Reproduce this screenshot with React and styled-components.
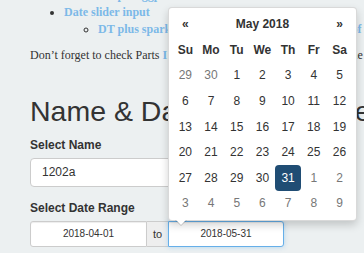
import React from 'react';
import styled, { createGlobalStyle } from 'styled-components';

const GlobalStyle = createGlobalStyle`
  html, body {
    margin: 0;
    padding: 0;
    background: #ecf0f1;
    overflow: hidden;
  }
  body {
    font-family: "Liberation Sans", Arial, Helvetica, sans-serif;
    color: #333;
  }
`;

const Page = styled.div`
  position: relative;
  width: 364px;
  height: 253px;
  overflow: hidden;
  padding-left: 30px;
  box-sizing: border-box;
`;

const Notes = styled.ul`
  margin: -30px 0 8.5px;
  padding-left: 34px;
  font-family: "Liberation Serif", "Times New Roman", serif;
  font-size: 12px;
  line-height: 17px;
  white-space: nowrap;
  list-style: disc;
`;

const SubNotes = styled.ul`
  margin: 0;
  padding-left: 34px;
  list-style: circle;
`;

const NoteLink = styled.a`
  color: #7cb9e8;
  font-weight: bold;
  text-decoration: none;
`;

const Paragraph = styled.p`
  margin: 0;
  font-family: "Liberation Serif", "Times New Roman", serif;
  font-size: 12px;
  line-height: 17px;
  white-space: nowrap;
`;

const Title = styled.h1`
  margin: 30.5px 0 8.5px;
  font-size: 28.5px;
  font-weight: normal;
  line-height: 34px;
  white-space: nowrap;
  color: #333;
`;

const Group = styled.div`
  margin-bottom: 13px;
`;

const Label = styled.label`
  display: block;
  margin-bottom: 4px;
  font-size: 12px;
  font-weight: bold;
  line-height: 17px;
`;

const TextBox = styled.div`
  width: 257px;
  height: 29px;
  box-sizing: border-box;
  padding: 0 11px;
  display: flex;
  align-items: center;
  background: #fff;
  border: 1px solid #ccc;
  border-radius: 4px;
  font-size: 12px;
`;

const RangeRow = styled.div`
  display: flex;
  height: 26px;
`;

const DateBox = styled.div`
  width: ${p => p.$w}px;
  box-sizing: border-box;
  display: flex;
  align-items: center;
  justify-content: center;
  background: #fff;
  font-size: 10px;
  border: 1px solid ${p => (p.$focus ? '#66afe9' : '#ccc')};
  border-radius: ${p => (p.$side === 'left' ? '3px 0 0 3px' : '0 3px 3px 0')};
  box-shadow: ${p => (p.$focus ? 'inset 0 1px 1px rgba(0,0,0,.075), 0 0 5px rgba(102,175,233,.45)' : 'inset 0 1px 1px rgba(0,0,0,.075)')};
`;

const Addon = styled.div`
  width: 21px;
  box-sizing: border-box;
  display: flex;
  align-items: center;
  justify-content: center;
  background: #eee;
  border-top: 1px solid #ccc;
  border-bottom: 1px solid #ccc;
  font-size: 11px;
`;

const Picker = styled.div`
  position: absolute;
  left: 168px;
  top: 7px;
  padding: 3.5px;
  background: #fff;
  border: 1px solid rgba(0, 0, 0, 0.15);
  border-radius: 4px;
  box-shadow: 0 4px 9px rgba(0, 0, 0, 0.18);
  display: grid;
  grid-template-columns: repeat(7, 25.7px);
  grid-auto-rows: 25.6px;
  font-size: 12px;

  &::before, &::after {
    content: '';
    position: absolute;
    border-left: solid transparent;
    border-right: solid transparent;
  }
  &::before {
    left: 6px;
    bottom: -6px;
    border-width: 6px 6px 0;
    border-top: 6px solid rgba(0, 0, 0, 0.18);
  }
  &::after {
    left: 7px;
    bottom: -5px;
    border-width: 5px 5px 0;
    border-top: 5px solid #fff;
  }
`;

const Cell = styled.div`
  display: flex;
  align-items: center;
  justify-content: center;
  grid-column: span ${p => p.$span || 1};
  font-weight: ${p => (p.$bold ? 'bold' : 'normal')};
  color: ${p => (p.$active ? '#fff' : p.$muted ? '#777' : '#333')};
  background: ${p => (p.$active ? '#204d74' : 'transparent')};
  border-radius: 4px;
`;

const dows = ['Su', 'Mo', 'Tu', 'We', 'Th', 'Fr', 'Sa'];

function buildDays() {
  const days = [];
  [29, 30].forEach(d => days.push({ d, muted: true }));
  for (let d = 1; d <= 31; d++) days.push({ d, active: d === 31 });
  for (let d = 1; d <= 9; d++) days.push({ d, muted: true });
  return days;
}

function Calendar() {
  const days = buildDays();
  return (
    <Picker>
      <Cell $bold>«</Cell>
      <Cell $bold $span={5}>May 2018</Cell>
      <Cell $bold>»</Cell>
      {dows.map(d => (
        <Cell key={d} $bold>{d}</Cell>
      ))}
      {days.map((x, i) => (
        <Cell key={i} $muted={x.muted} $active={x.active}>{x.d}</Cell>
      ))}
    </Picker>
  );
}

export default function App() {
  return (
    <>
      <GlobalStyle />
      <Page>
        <Notes>
          <li>
            <NoteLink>Date range input</NoteLink>
            <SubNotes>
              <li><NoteLink>DT plus ggplot</NoteLink></li>
            </SubNotes>
          </li>
          <li>
            <NoteLink>Date slider input</NoteLink>
            <SubNotes>
              <li><NoteLink>DT plus sparklines as a fun little visual summary of our data</NoteLink></li>
            </SubNotes>
          </li>
        </Notes>
        <Paragraph>
          Don’t forget to check Parts <NoteLink>I</NoteLink> and <NoteLink>II</NoteLink> of this short tutorial series for the 'basics'.
        </Paragraph>
        <Title>Name &amp; Date Range Picker</Title>
        <Group>
          <Label>Select Name</Label>
          <TextBox>1202a</TextBox>
        </Group>
        <Group>
          <Label>Select Date Range</Label>
          <RangeRow>
            <DateBox $w={117} $side="left">2018-04-01</DateBox>
            <Addon>to</Addon>
            <DateBox $w={116} $side="right" $focus>2018-05-31</DateBox>
          </RangeRow>
        </Group>
        <Calendar />
      </Page>
    </>
  );
}
